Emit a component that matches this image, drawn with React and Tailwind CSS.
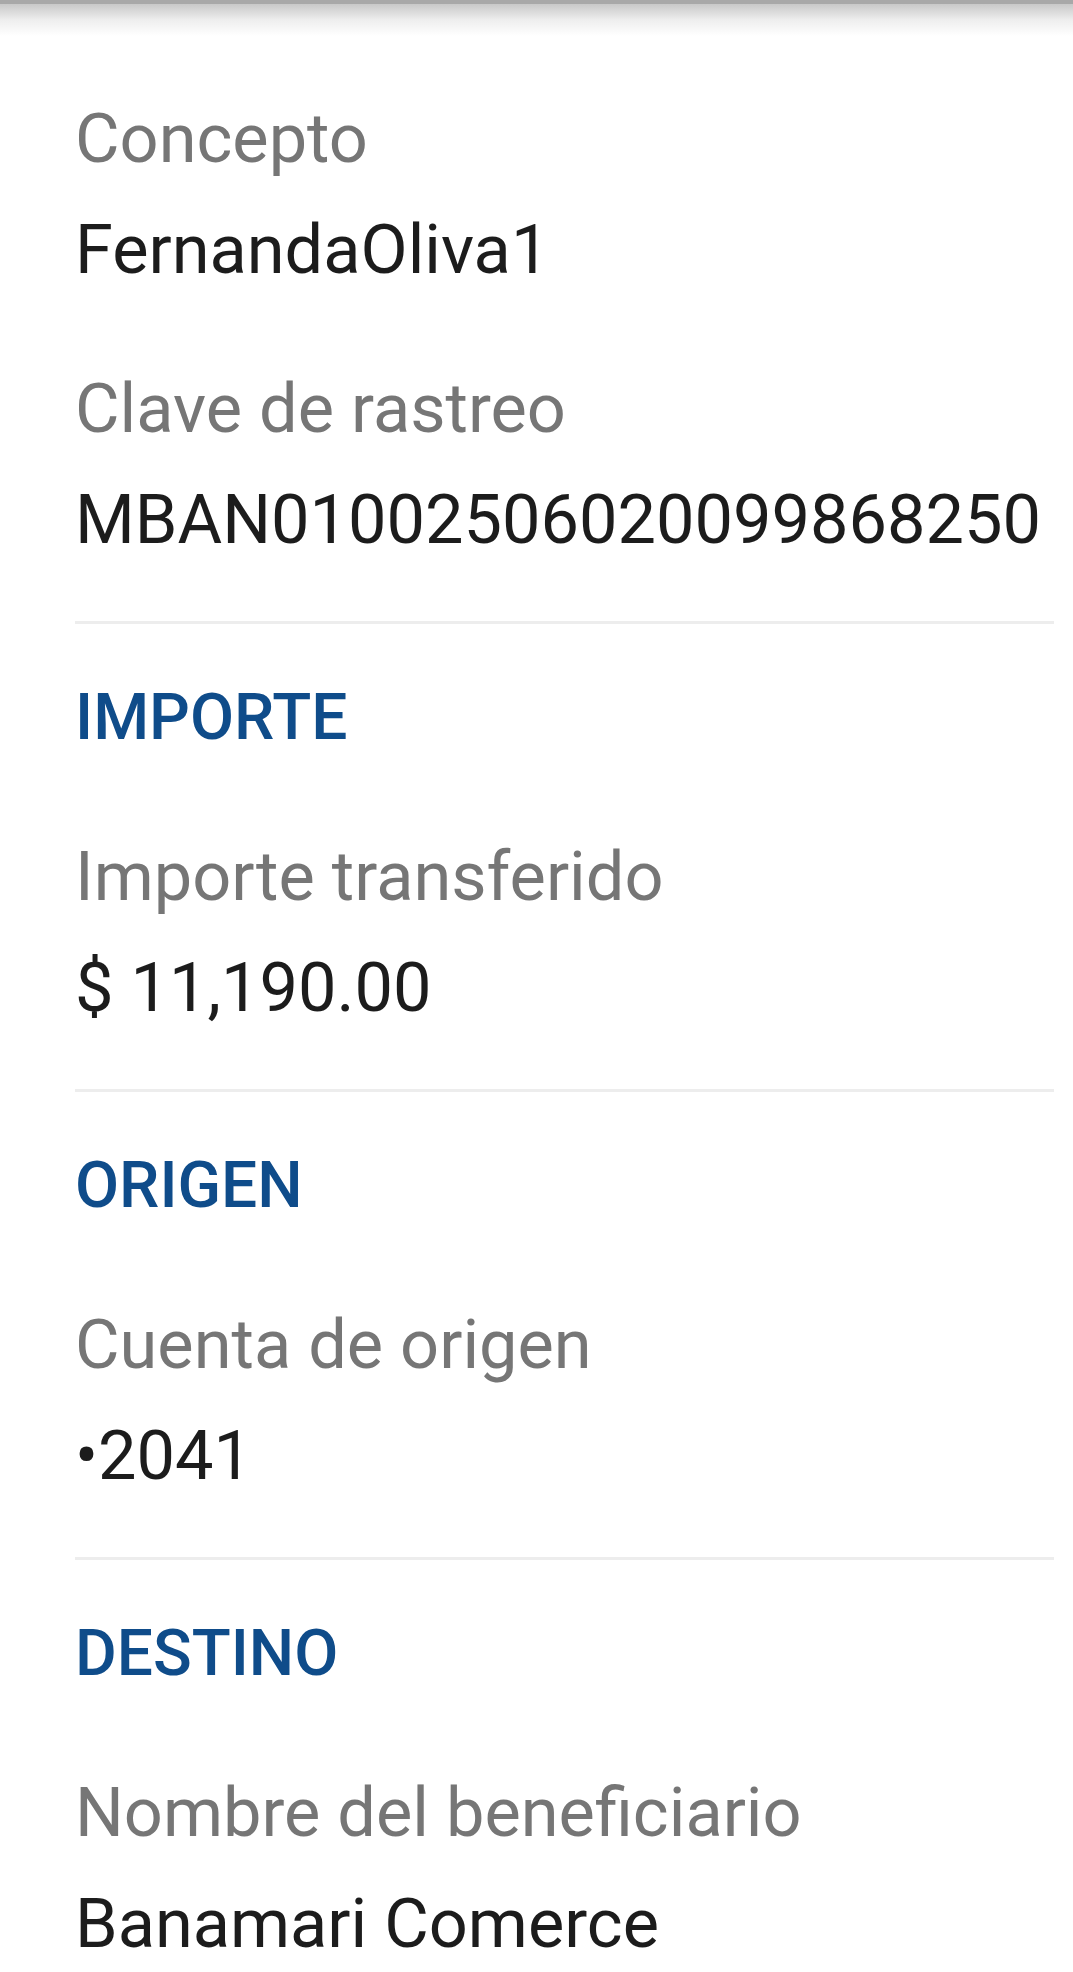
const sections = [
  {
    items: [
      { label: "Concepto", value: "FernandaOliva1" },
      { label: "Clave de rastreo", value: "MBAN01002506020099868250" },
    ],
  },
  {
    title: "IMPORTE",
    items: [{ label: "Importe transferido", value: "$ 11,190.00" }],
  },
  {
    title: "ORIGEN",
    items: [{ label: "Cuenta de origen", value: "•2041" }],
  },
  {
    title: "DESTINO",
    items: [{ label: "Nombre del beneficiario", value: "Banamari Comerce" }],
  },
];

function Field({ label, value }) {
  return (
    <div className="flex flex-col">
      <div className="text-[68.5px] leading-[80px] text-[#767676]">{label}</div>
      <div className="mt-[31px] text-[68.5px] leading-[80px] text-[#1c1c1c]">{value}</div>
    </div>
  );
}

export default function App() {
  return (
    <div
      className="min-h-[1972px] w-full bg-white"
      style={{ fontFamily: "Roboto, 'Noto Sans', sans-serif" }}
    >
      <div className="h-[4px] bg-[#a8a8a8]" />
      <div className="h-[32px] bg-linear-to-b from-[#c8c8c8] via-[#eeeeee] to-white" />
      <div className="flex flex-col pl-[75px] pr-[19px] pt-[63px]">
        {sections.map((s, i) => (
          <div key={i} className="flex flex-col">
            {i > 0 && <div className="mt-[61px] h-[3px] bg-[#ededed]" />}
            {s.title && (
              <div className="mt-[54px] mb-[79px] text-[64px] leading-[80px] font-medium text-[#0f4c8a]">
                {s.title}
              </div>
            )}
            <div className="flex flex-col gap-[79px]">
              {s.items.map((it) => (
                <Field key={it.label} {...it} />
              ))}
            </div>
          </div>
        ))}
      </div>
    </div>
  );
}
